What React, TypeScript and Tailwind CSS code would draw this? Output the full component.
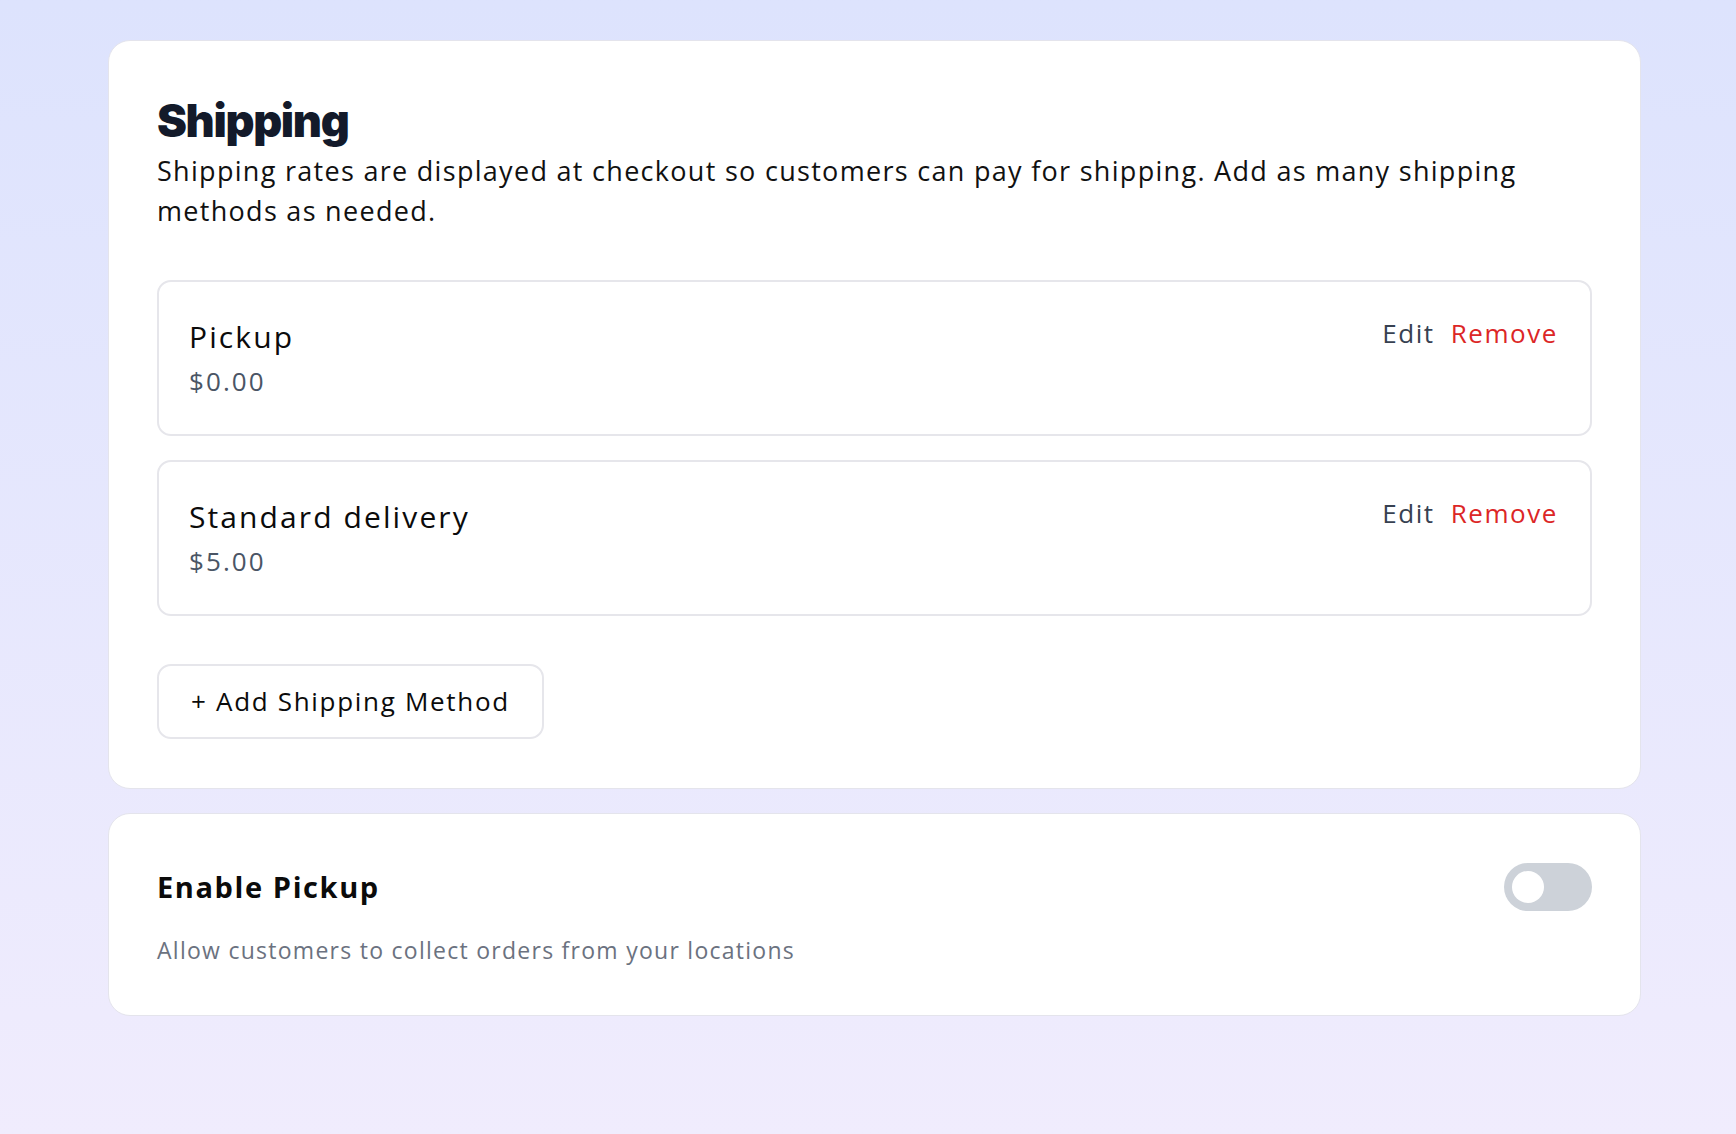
import { useState } from "react"

const methods = [
  { name: "Pickup", price: "$0.00" },
  { name: "Standard delivery", price: "$5.00" },
]

function Toggle() {
  const [on, setOn] = useState(false)
  return (
    <button
      type="button"
      onClick={() => setOn(!on)}
      className={`flex h-[48px] w-[88px] shrink-0 items-center rounded-full px-[8px] transition-colors ${
        on ? "bg-indigo-500" : "bg-[#cdd2d9]"
      }`}
    >
      <span
        className={`h-[32px] w-[32px] rounded-full bg-white transition-transform ${
          on ? "translate-x-[40px]" : "translate-x-0"
        }`}
      />
    </button>
  )
}

export default function App() {
  return (
    <div
      className="min-h-screen bg-gradient-to-b from-[#dde3fd] to-[#f0ecfd] pb-[40px] pl-[108px] pt-[40px]"
      style={{ fontFamily: '"Open Sans", "Liberation Sans", sans-serif' }}
    >
      <div className="flex w-[1533px] flex-col gap-[24px]">
        {/* Shipping methods card */}
        <section className="rounded-[22px] border border-[#e4e4ec] bg-white px-[48px] pb-[49px] pt-[57px]">
          <h1
            className="text-[45px] font-black leading-[45px] tracking-[-0.03em] text-[#131a2a]"
            style={{ fontFamily: "Inter, sans-serif" }}
          >
            Shipping
          </h1>
          <p className="mt-[8px] text-[27px] leading-[40px] tracking-[0.048em] text-[#111]">
            Shipping rates are displayed at checkout so customers can pay for shipping. Add as many shipping
            methods as needed.
          </p>

          <div className="mt-[49px] flex flex-col gap-[24px]">
            {methods.map((m) => (
              <div
                key={m.name}
                className="flex items-start justify-between rounded-[14px] border-2 border-[#e6e6eb] pb-[35px] pl-[30px] pr-[32px] pt-[35px]"
              >
                <div className="flex flex-col">
                  <span className="text-[30px] font-medium leading-[40px] tracking-[0.07em] text-[#0b0b0b]">
                    {m.name}
                  </span>
                  <span className="mt-[6px] text-[26px] leading-[36px] tracking-[0.08em] text-[#4a5565]">
                    {m.price}
                  </span>
                </div>
                <div className="-mt-[2px] flex items-center gap-[16px] text-[26px] leading-[36px] tracking-[0.06em]">
                  <button type="button" className="text-[#374151]">
                    Edit
                  </button>
                  <button type="button" className="text-[#dc2626]">
                    Remove
                  </button>
                </div>
              </div>
            ))}
          </div>

          <button
            type="button"
            className="mt-[48px] h-[75px] rounded-[14px] border-2 border-[#e6e6eb] px-[32px] text-[26px] tracking-[0.065em] text-[#0b0b0b]"
          >
            + Add Shipping Method
          </button>
        </section>

        {/* Pickup card */}
        <section className="rounded-[22px] border border-[#e4e4ec] bg-white px-[48px] pb-[49px] pt-[49px]">
          <div className="flex items-center justify-between">
            <h2 className="text-[29px] font-bold leading-[40px] tracking-[0.055em] text-[#0b0b0b]">
              Enable Pickup
            </h2>
            <Toggle />
          </div>
          <p className="mt-[23px] text-[23px] leading-[32px] tracking-[0.055em] text-[#6b7280]">
            Allow customers to collect orders from your locations
          </p>
        </section>
      </div>
    </div>
  )
}
